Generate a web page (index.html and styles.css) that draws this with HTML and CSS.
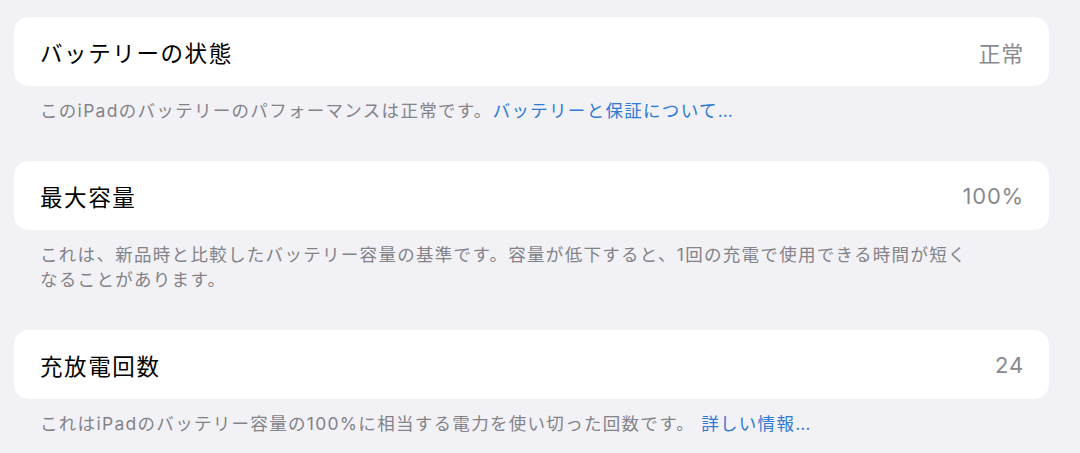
FILE: index.html
```html
<!DOCTYPE html>
<html lang="ja">
<head>
<meta charset="utf-8">
<title>バッテリー</title>
<link rel="stylesheet" href="styles.css">
</head>
<body>
<main class="page">
  <section class="group">
    <div class="card">
      <span class="label">バッテリーの状態</span>
      <span class="value">正常</span>
    </div>
    <p class="footer">このiPadのバッテリーのパフォーマンスは正常です。<a class="link">バッテリーと保証について…</a></p>
  </section>
  <section class="group">
    <div class="card">
      <span class="label">最大容量</span>
      <span class="value">100%</span>
    </div>
    <p class="footer">これは、新品時と比較したバッテリー容量の基準です。容量が低下すると、1回の充電で使用できる時間が短く<br>なることがあります。</p>
  </section>
  <section class="group">
    <div class="card">
      <span class="label">充放電回数</span>
      <span class="value">24</span>
    </div>
    <p class="footer">これはiPadのバッテリー容量の100%に相当する電力を使い切った回数です。 <a class="link">詳しい情報…</a></p>
  </section>
</main>
</body>
</html>
```

FILE: styles.css
```css
html, body {
  margin: 0;
  padding: 0;
  background: #f2f1f6;
}

body {
  font-family: Inter, "Noto Sans CJK JP", "Noto Sans", sans-serif;
  -webkit-font-smoothing: antialiased;
}

.page {
  display: flex;
  flex-direction: column;
  gap: 38px;
  padding: 17px 31px 0 14px;
}

.group {
  display: flex;
  flex-direction: column;
}

.card {
  display: flex;
  align-items: center;
  justify-content: space-between;
  height: 69px;
  padding: 0 25px 0 26px;
  background: #ffffff;
  border-radius: 15px;
}

.label {
  font-size: 22.5px;
  letter-spacing: 1.6px;
  color: #000000;
}

.value {
  font-size: 22px;
  letter-spacing: 0.8px;
  color: #8a8a8e;
}

.footer {
  margin: 12px 0 0 0;
  padding: 0 26px;
  font-size: 17.5px;
  line-height: 25px;
  letter-spacing: 1.3px;
  color: #838388;
}

.link {
  color: #2f7ad2;
  text-decoration: none;
}
```
